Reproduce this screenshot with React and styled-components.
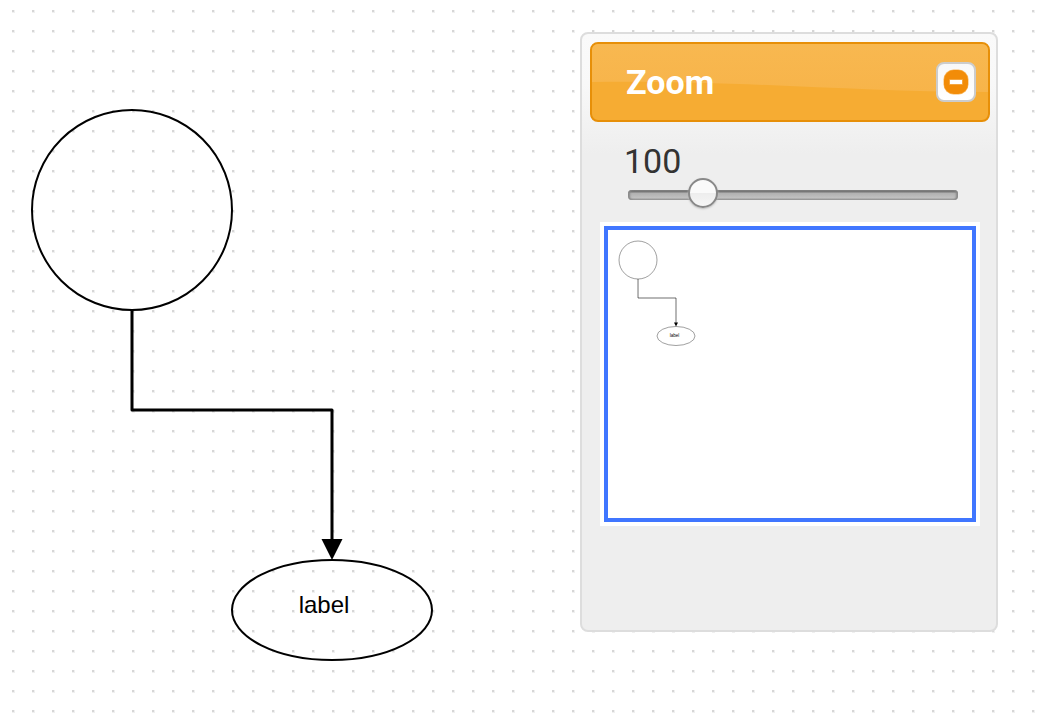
import React, { useState } from "react";
import styled, { createGlobalStyle } from "styled-components";

const GlobalStyle = createGlobalStyle`
  *, *::before, *::after { box-sizing: border-box; }
  body {
    margin: 0;
    background-color: #fff;
    font-family: Roboto, "Liberation Sans", sans-serif;
  }
`;

const Canvas = styled.main`
  display: grid;
  grid-template-columns: minmax(0, 1fr) minmax(320px, 418px);
  align-items: start;
  min-height: 100vh;
  padding-right: 48px;
  background-image:
    conic-gradient(from 270deg at 2px 2px, #d6d6d6 90deg, transparent 0),
    conic-gradient(from 270deg at 3px 3px, #f0f0f0 90deg, transparent 0);
  background-size: 20px 20px;
  background-position: 12px 10px;
`;

const Drawing = styled.svg`
  display: block;
  width: 100%;
  height: 100vh;
  overflow: visible;
`;

const Panel = styled.aside`
  min-height: 600px;
  margin-top: 32px;
  padding: 8px 6px 8px 8px;
  border: 2px solid #ddd;
  border-radius: 8px;
  background: #eee linear-gradient(#fafafa 0, #f8f8f8 50px, #eee 120px) no-repeat;
`;

const PanelHeader = styled.header`
  position: relative;
  display: flex;
  align-items: center;
  justify-content: space-between;
  height: 80px;
  padding: 0 12px 0 34px;
  overflow: hidden;
  border: 2px solid #e78f08;
  border-radius: 8px;
  background: #f6ac33;
`;

const Gloss = styled.svg`
  position: absolute;
  inset: 0;
  width: 100%;
  height: 100%;
`;

const Title = styled.h1`
  position: relative;
  margin: 0;
  color: #fff;
  font-size: 34px;
  line-height: 40px;
  font-weight: 700;
`;

const CollapseButton = styled.button`
  position: relative;
  display: grid;
  place-items: center;
  width: 40px;
  height: 40px;
  padding: 0;
  border: 2px solid #ccc;
  border-radius: 8px;
  background: linear-gradient(#f8f8f8, #fff);
  cursor: pointer;
`;

const ZoomControl = styled.div`
  padding: 20px 32px 0 34px;
`;

const ZoomValue = styled.label`
  display: block;
  color: #333;
  font-size: 34px;
  line-height: 38px;
`;

const ZoomSlider = styled.input`
  display: block;
  width: 100%;
  height: 30px;
  margin: 0;
  padding: 0 0 0 4px;
  appearance: none;
  background: transparent;

  &::-webkit-slider-runnable-track {
    height: 10px;
    border-radius: 4px;
    background: linear-gradient(#757575 0, #777 2px, #b0b0b0 3px, #c1c1c1 8px, #a6a6a6 9px);
    box-shadow: inset 2px 0 2px #888, inset -2px 0 2px #888;
  }

  &::-webkit-slider-thumb {
    width: 30px;
    height: 30px;
    margin-top: -12px;
    appearance: none;
    border: 2px solid #888;
    border-radius: 50%;
    background: linear-gradient(#fafafa 50%, #ededed 50%, #f6f6f6);
    box-shadow: 0 1px 2px #bbb;
  }
`;

const Overview = styled.div`
  margin: 12px 10px 0;
  padding: 4px;
  background: #fff;
`;

const Viewport = styled.div`
  height: 296px;
  overflow: hidden;
  border: 4px solid #4076ff;
`;

const OverviewDrawing = styled.svg`
  display: block;
  width: 100%;
  height: 100%;
`;

const NodeLabel = styled.text`
  font-family: "Liberation Sans", sans-serif;
  font-size: 24px;
`;

function Diagram() {
  return (
    <g fill="none" stroke="#000" strokeWidth="2">
      <circle cx="132" cy="210" r="100" />
      <path d="M132 310V410H332V542" strokeWidth="3" strokeLinejoin="round" />
      <path d="M321.500 539H342.500L332 560Z" fill="#000" stroke="none" />
      <ellipse cx="332" cy="610" rx="100" ry="50" />
      <NodeLabel x="324" y="613" textAnchor="middle" fill="#000" stroke="none">label</NodeLabel>
    </g>
  );
}

export default function App() {
  const [zoom, setZoom] = useState(100);
  const [open, setOpen] = useState(true);
  return (
    <>
      <GlobalStyle />
      <Canvas>
        <Drawing role="img" aria-label="Diagram">
          <Diagram />
        </Drawing>
        <Panel>
          <PanelHeader>
            <Gloss viewBox="0 0 396 76" preserveAspectRatio="none" aria-hidden="true">
              <defs>
                <linearGradient id="gloss" x1="0" y1="0" x2="0" y2="1">
                  <stop offset="0" stopColor="#f8b850" />
                  <stop offset="1" stopColor="#f7b44a" />
                </linearGradient>
              </defs>
              <path d="M0 0H396V48C260 48 150 36 0 38Z" fill="url(#gloss)" />
            </Gloss>
            <Title>Zoom</Title>
            <CollapseButton type="button" aria-label="Collapse" aria-expanded={open} onClick={() => setOpen(!open)}>
              <svg width="26" height="26" viewBox="0 0 26 26" aria-hidden="true">
                <rect x="0.500" y="0.500" width="25" height="25" rx="10" fill="#f9b55a" />
                <rect x="1" y="1" width="24" height="24" rx="10" fill="#f28c08" />
                <rect x="6" y="10" width="14" height="6" rx="1" fill="#f5a63f" />
                <rect x="7" y="11" width="12" height="4" fill="#fff" />
              </svg>
            </CollapseButton>
          </PanelHeader>
          {open && (
            <>
              <ZoomControl>
                <ZoomValue htmlFor="zoom">{zoom}</ZoomValue>
                <ZoomSlider
                  id="zoom"
                  type="range"
                  min="0"
                  max="500"
                  value={zoom}
                  onChange={(e) => setZoom(Number(e.target.value))}
                />
              </ZoomControl>
              <Overview>
                <Viewport>
                  <OverviewDrawing
                    viewBox="-26 52 1916 1516"
                    preserveAspectRatio="xMinYMin"
                    role="img"
                    aria-label="Diagram overview"
                  >
                    <Diagram />
                  </OverviewDrawing>
                </Viewport>
              </Overview>
            </>
          )}
        </Panel>
      </Canvas>
    </>
  );
}
